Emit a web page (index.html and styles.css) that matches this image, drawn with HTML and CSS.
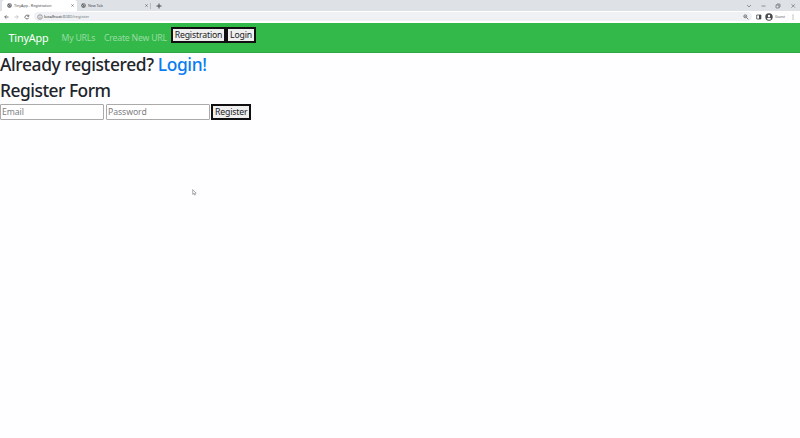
FILE: index.html
```html
<!DOCTYPE html>
<html lang="en">
<head>
<meta charset="utf-8">
<title>TinyApp - Registration</title>
<link rel="stylesheet" href="styles.css">
</head>
<body>
<svg class="defs" width="0" height="0"><defs>
<symbol id="globe" viewBox="0 0 10 10"><circle cx="5" cy="5" r="4.5" fill="#4d5156"/><path d="M1.3 4.2 4 5.2 4.4 7.8M5.4 1.2 5 2.8 7.8 3.6M6 6.1 8.5 5.2" fill="none" stroke="#fff" stroke-width="1.2"/></symbol>
<symbol id="close" viewBox="0 0 10 10"><path d="M1 1 9 9M9 1 1 9" stroke="#45484c" stroke-width="1.7"/></symbol>
</defs></svg>
<div class="tabs">
  <div class="tab active"><svg class="fav"><use href="#globe"/></svg><span class="tab-title">TinyApp - Registration</span><svg class="x"><use href="#close"/></svg></div>
  <div class="tab second"><svg class="fav"><use href="#globe"/></svg><span class="tab-title new">New Tab</span><svg class="x"><use href="#close"/></svg></div>
  <svg class="plus" viewBox="0 0 6 6"><path d="M3 .5v5M.5 3h5" stroke="#44474b" stroke-width="1"/></svg>
  <svg class="window" viewBox="0 0 54 8" fill="none" stroke="#6b6e72" stroke-width=".7"><path d="m2 3 2 2 2-2M16.5 4h4M31 3h3v3h-3zM32 3V2h3v3h-1M46.5 2.2l3.4 3.4M49.9 2.2l-3.4 3.4"/></svg>
</div>
<div class="toolbar">
  <svg class="nav-icons" viewBox="0 0 28 8" fill="none" stroke-width=".8"><path d="M4.5 4H.8M2.4 2.3.7 4l1.7 1.7" stroke="#55585c"/><path d="M10.5 4h3.7M12.6 2.3 14.3 4l-1.7 1.7" stroke="#b9bbbe"/><path d="M24.5 3A1.9 1.9 0 1 0 24.7 4.7M24.8 1.7v1.6h-1.6" stroke="#55585c"/></svg>
  <div class="address">
    <svg class="info" viewBox="0 0 6 6"><circle cx="3" cy="3" r="2.3" fill="none" stroke="#66696d" stroke-width=".6"/><path d="M3 2.7v1.7M3 1.5v.6" stroke="#66696d" stroke-width=".6"/></svg>
    <span class="url"><b>localhost</b>:8080/register</span>
    <svg class="mag" viewBox="0 0 6 6" fill="none" stroke="#5f6368" stroke-width=".8"><circle cx="2.3" cy="2.3" r="1.5"/><path d="m3.4 3.4 2 2M1.5 2.3h1.6"/></svg>
  </div>
  <svg class="panel" viewBox="0 0 6 6"><path d="M.7 1h4.2v4H.7z" fill="none" stroke="#46494d" stroke-width=".8"/><path d="M3 1h2v4H3z" fill="#46494d"/></svg>
  <div class="guest"><svg class="avatar" viewBox="0 0 8 8"><circle cx="4" cy="4" r="3.7" fill="#46494d"/><circle cx="4" cy="2.9" r="1.2" fill="#fff"/><path d="M1.8 6c.5-1.6 3.9-1.6 4.4 0-.8 1-3.6 1-4.4 0" fill="#fff"/></svg><span>Guest</span></div>
  <svg class="more" viewBox="0 0 2 6" fill="#5f6368"><circle cx="1" cy="1" r=".5"/><circle cx="1" cy="3" r=".5"/><circle cx="1" cy="5" r=".5"/></svg>
</div>
<nav class="navbar">
  <a class="brand">TinyApp</a><a class="link urls">My URLs</a><a class="link create">Create New URL</a>
  <div class="auth"><button class="registration">Registration</button><button class="login">Login</button></div>
</nav>
<main>
  <h3 class="prompt">Already registered? <a>Login!</a></h3>
  <h3 class="form-title">Register Form</h3>
  <form><input type="email" placeholder="Email"><input type="password" placeholder="Password"><button type="button" class="submit">Register</button></form>
</main>
<svg class="cursor" viewBox="0 0 5 7"><path d="M.7.6v4.8l1.1-1 .8 1.7.8-.4-.7-1.6h1.5z" fill="#fff" stroke="#777" stroke-width=".6"/></svg>
</body>
</html>
```
FILE: styles.css
```css
* { box-sizing: border-box; }
body { margin: 0; height: 438px; overflow: hidden; background: #fefdff; color: #212529; font: 8.4px "Noto Sans", sans-serif; }
svg { display: block; flex: none; }
.defs { position: absolute; }
.tabs { height: 11px; display: flex; align-items: center; background: #dee1e6; }
.tab { height: 11px; display: flex; align-items: center; font-size: 3.8px; color: #4a4d51; }
.active { width: 75px; margin-left: 2px; padding-left: 5px; background: #fff; border-radius: 3px 3px 0 0; }
.second { width: 74px; padding-left: 4px; border-right: 1px solid #b9bcc0; height: 6px; }
.fav { width: 5px; height: 5px; margin-right: 2px; }
.tab-title { width: 57px; letter-spacing: -.08px; white-space: nowrap; }
.new { width: 57px; }
.x { width: 3px; height: 3px; }
.plus { width: 6px; height: 6px; margin-left: 5px; }
.window { width: 54px; height: 8px; margin-left: auto; margin-right: 1px; }
.toolbar { height: 11.5px; display: flex; align-items: center; background: #fff; }
.nav-icons { width: 28px; height: 8px; margin-left: 4px; }
.address { width: 718px; height: 9px; margin-left: 2px; padding: 0 3px; border-radius: 5px; display: flex; align-items: center; background: #eff1f4; }
.info { width: 6px; height: 6px; }
.url { margin-left: 1px; font-size: 4.2px; line-height: 6px; color: #74777b; }
.url b { font-weight: 400; color: #222; }
.mag { width: 6px; height: 6px; margin-left: auto; }
.panel { width: 6px; height: 6px; margin-left: 4px; }
.guest { width: 23px; height: 8px; margin-left: 3px; display: flex; align-items: center; gap: 2px; border-radius: 4px; font-size: 3.7px; color: #5f6368; box-shadow: 0 0 1px #ddd; }
.avatar { width: 8px; height: 8px; }
.more { width: 2px; height: 6px; margin-left: 4px; }
.navbar { height: 30.5px; display: flex; align-items: center; background: #33b949; border-bottom: 1px solid #2da843; white-space: nowrap; }
.brand { width: 53px; margin-left: 8.5px; padding-top: 1px; color: #fff; font-size: 10.8px; letter-spacing: -.15px; }
.link { padding-top: 2px; color: #98dca3; font-size: 8.7px; letter-spacing: -.2px; }
.urls { width: 42.5px; }
.create { width: 67px; }
.auth { display: flex; align-self: flex-start; margin-top: 4.5px; }
button { height: 16px; padding: 0; border: 2px solid #101012; background: #efefef; color: #202124; font: 8.7px "Noto Sans", sans-serif; letter-spacing: -.15px; line-height: 12px; white-space: nowrap; }
.registration { width: 55px; }
.login { width: 30px; }
h3 { margin: 0; font: 500 17.4px/22px "Noto Sans", sans-serif; letter-spacing: -.37px; white-space: nowrap; }
.prompt { height: 25px; }
.prompt a { color: #087cf0; }
.form-title { height: 26px; line-height: 25px; letter-spacing: -.5px; }
form { display: flex; gap: 2px; }
input { width: 104px; height: 16px; padding: 0 1px; border: 1px solid #aaa; border-radius: 1px; background: #fff; font: 8.7px "Noto Sans", sans-serif; letter-spacing: -.08px; }
input::placeholder { color: #808084; }
.submit { width: 40px; margin-left: -.7px; }
.cursor { position: absolute; left: 191.5px; top: 188.5px; width: 5px; height: 7px; }
```
